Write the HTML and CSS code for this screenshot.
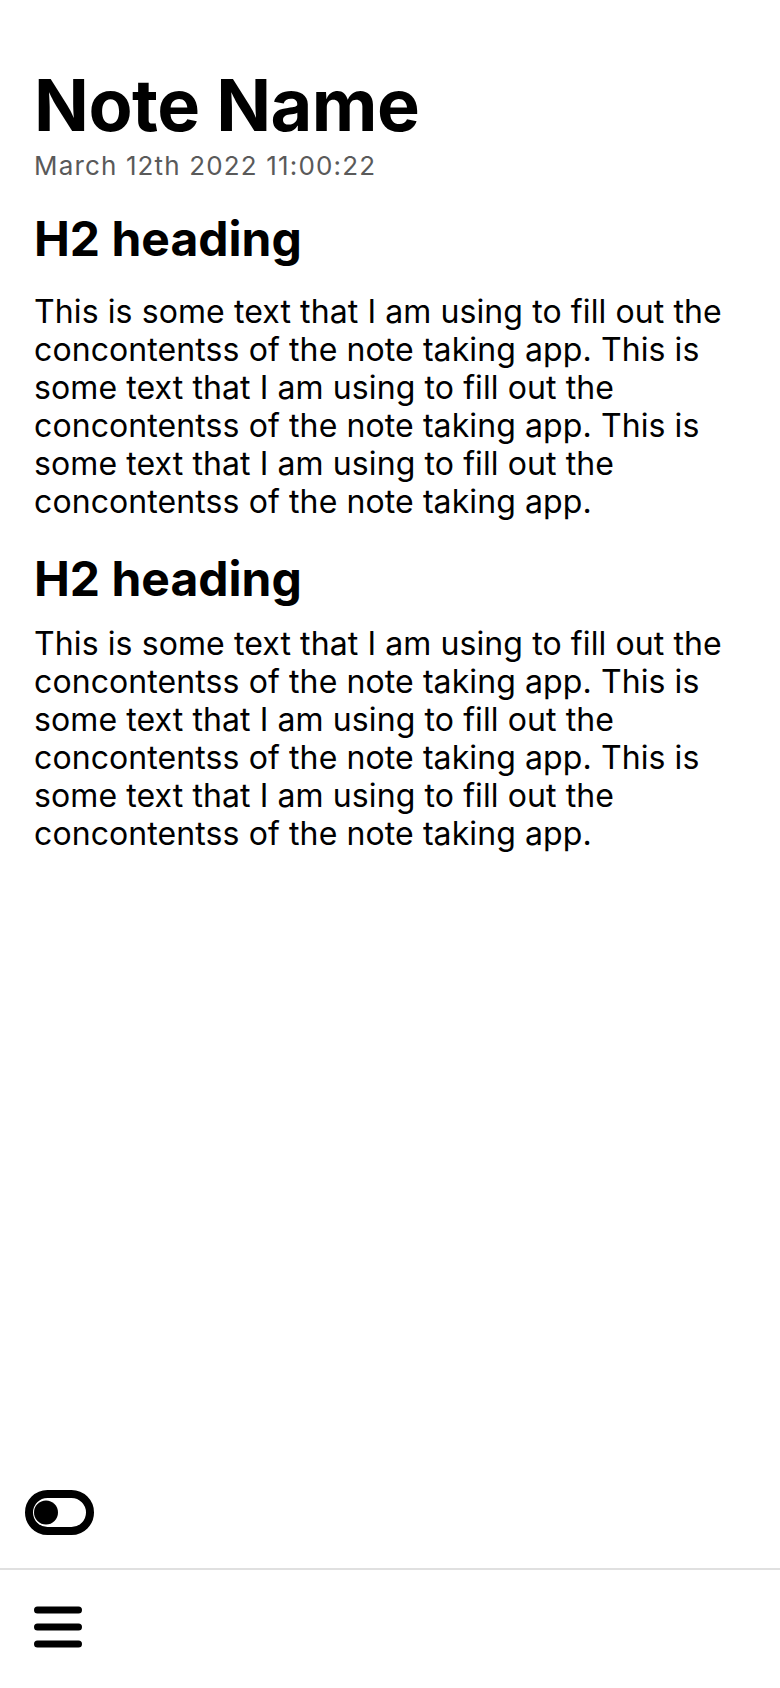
FILE: index.html
```html
<!DOCTYPE html>
<html lang="en">
<head>
<meta charset="utf-8">
<title>Note Name</title>
<link rel="stylesheet" href="styles.css">
</head>
<body>
<div class="app">
  <main class="note">
    <header class="note-header">
      <h1 class="note-title">Note Name</h1>
      <div class="note-date">March 12th 2022 11:00:22</div>
    </header>
    <section class="note-section">
      <h2 class="note-h2">H2 heading</h2>
      <p class="note-p first">This is some text that I am using to fill out the concontentss of the note taking app. This is some text that I am using to fill out the concontentss of the note taking app. This is some text that I am using to fill out the concontentss of the note taking app.</p>
    </section>
    <section class="note-section">
      <h2 class="note-h2">H2 heading</h2>
      <p class="note-p">This is some text that I am using to fill out the concontentss of the note taking app. This is some text that I am using to fill out the concontentss of the note taking app. This is some text that I am using to fill out the concontentss of the note taking app.</p>
    </section>
  </main>
  <div class="toolbar">
    <button class="icon-btn toggle" aria-label="Toggle theme">
      <svg width="70" height="45" viewBox="0 0 70 45">
        <rect x="4" y="4" width="61" height="37" rx="18.5" fill="none" stroke="#000" stroke-width="8"/>
        <circle cx="21" cy="22.5" r="12" fill="#000"/>
      </svg>
    </button>
  </div>
  <nav class="bottom-nav">
    <button class="icon-btn menu" aria-label="Menu">
      <svg width="48" height="42" viewBox="0 0 48 42">
        <path d="M3.5 4H44.5M3.5 21H44.5M3.5 38H44.5" stroke="#000" stroke-width="7" stroke-linecap="round" fill="none"/>
      </svg>
    </button>
  </nav>
</div>
</body>
</html>
```

FILE: styles.css
```css
* { box-sizing: border-box; }
html, body { margin: 0; padding: 0; background: #fff; }
body {
  font-family: Inter, "Noto Sans", sans-serif;
  color: #000;
}
.app {
  min-height: 100vh;
  display: flex;
  flex-direction: column;
}
.note {
  flex: 1;
  padding: 61px 24px 0 34px;
}
.note-title {
  margin: 0;
  font-size: 72px;
  font-weight: 700;
  line-height: 88px;
  letter-spacing: -0.5px;
}
.note-date {
  margin-top: 2px;
  font-size: 26px;
  line-height: 30px;
  letter-spacing: 1.15px;
  color: #5a5a5a;
}
.note-section { margin-top: 29px; }
.note-h2 {
  margin: 0;
  font-size: 48px;
  font-weight: 700;
  line-height: 58px;
}
.note-p {
  margin: 17px 0 0;
  font-size: 32px;
  line-height: 38px;
  letter-spacing: 0.1px;
}
.note-p.first { margin-top: 25px; }
.toolbar {
  padding: 0 0 33px 25px;
  border-bottom: 2px solid #e0e0e0;
}
.icon-btn {
  background: none;
  border: 0;
  padding: 0;
  display: block;
}
.icon-btn svg { display: block; }
.bottom-nav {
  height: 118px;
  padding: 36px 0 0 34px;
}
```
